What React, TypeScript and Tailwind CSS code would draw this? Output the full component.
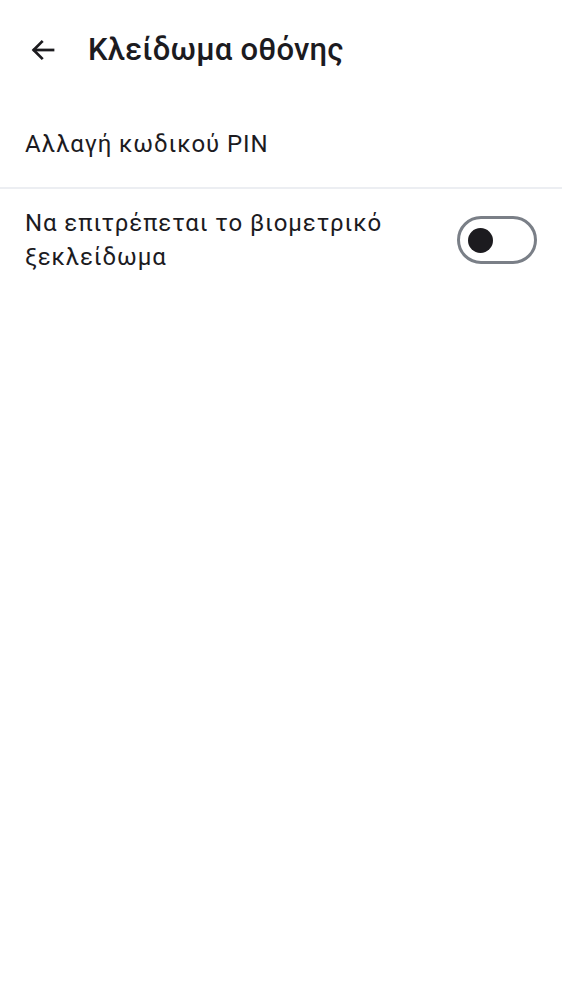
import { useState } from "react";

export default function App() {
  const [biometric, setBiometric] = useState(false);

  return (
    <div className="min-h-screen bg-white text-[#1c1b1f]" style={{ fontFamily: "Roboto, 'Noto Sans', sans-serif" }}>
      {/* Top bar */}
      <header className="flex items-center h-[100px] px-[28px]">
        <button className="w-[30px] h-[30px] flex items-center justify-center">
          <svg width="30" height="30" viewBox="0 0 24 24" fill="none" stroke="#1c1b1f" strokeWidth="2.2" strokeLinecap="square">
            <path d="M20 12H5" />
            <path d="M11 5.5 4.5 12l6.5 6.5" />
          </svg>
        </button>
        <h1 className="ml-[30px] text-[31px] font-medium tracking-[0.2px]">Κλείδωμα οθόνης</h1>
      </header>

      {/* Settings */}
      <div>
        <button className="w-full text-left px-[25px] h-[87px] flex items-center text-[24px] tracking-[0.9px]">
          Αλλαγή κωδικού PIN
        </button>
        <div className="h-[2px] bg-[#eceef2]" />
        <div className="flex items-center justify-between pl-[25px] pr-[25px] pt-[17px] pb-[16px]">
          <span className="text-[24px] leading-[34px] tracking-[0.9px] max-w-[400px]">
            Να επιτρέπεται το βιομετρικό ξεκλείδωμα
          </span>
          <button
            onClick={() => setBiometric(!biometric)}
            className="w-[80px] h-[48px] rounded-full border-[3px] border-[#7a7f87] flex items-center px-[8px] shrink-0"
          >
            <span className="w-[25px] h-[25px] rounded-full bg-[#1c1b1f]" />
          </button>
        </div>
      </div>
    </div>
  );
}
